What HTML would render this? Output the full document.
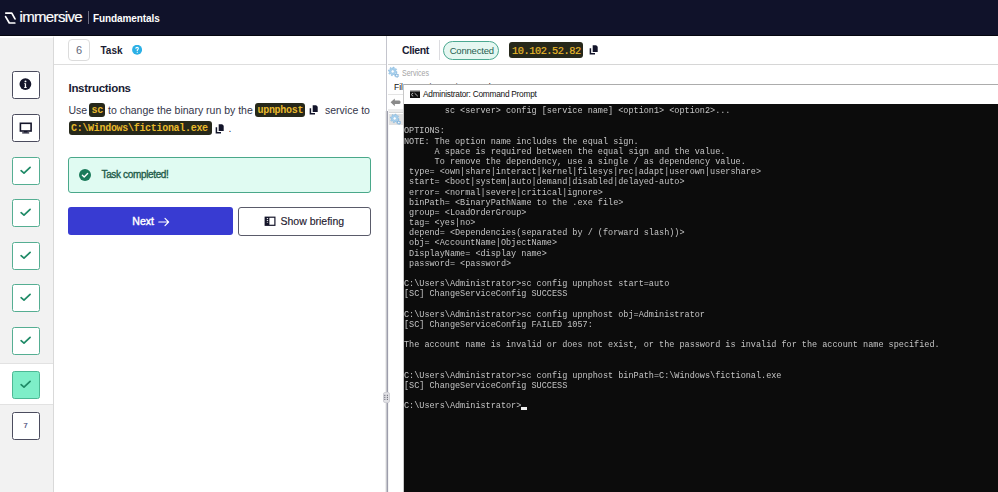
<!DOCTYPE html>
<html><head><meta charset="utf-8">
<style>
*{margin:0;padding:0;box-sizing:border-box}
html,body{width:998px;height:492px;overflow:hidden;background:#fff;font-family:"Liberation Sans",sans-serif;position:relative}
.abs{position:absolute}
#hdr{z-index:10;left:0;top:0;width:998px;height:36px;background:#10122a;border-bottom:1px solid #05060f}
#side{left:0;top:36px;width:54px;height:456px;background:#f2f2f2;border-right:1px solid #d9d9d9;border-top:2px solid #fff}
.row{position:absolute;left:0;width:53px;height:42.5px}
.sq{position:absolute;left:12px;top:7px;width:28px;height:28px;border:1.5px solid #4b4c5e;border-radius:2.5px;background:#fff}
.sq.g{border-color:#55ae92}
.sq svg{position:absolute;left:0;top:0}
#task{left:54px;top:35px;width:332px;height:457px;background:#fff}
#split{z-index:5;left:385px;top:111px;width:4px;height:381px;background:linear-gradient(to right,#eeeeee 0,#eeeeee 1px,#c6c7cd 1px,#c6c7cd 2px,#9c9dab 2px,#9c9dab 3px,#f4f4f4 3px)}
#split2{z-index:5;left:386px;top:36px;width:1.3px;height:75px;background:#c4c5cd}
#rp{left:388px;top:35px;width:610px;height:457px;background:#fff;overflow:hidden}
.term{position:absolute;font-family:"Liberation Mono",monospace;font-size:8.5px;color:#c4c4c4;white-space:pre;line-height:10.19px;will-change:transform}
.txt{position:absolute;white-space:nowrap;line-height:1}
.badge{position:absolute;background:#26281a;border-radius:3px;color:#e8b92a;font-family:"Liberation Mono",monospace;font-weight:bold;white-space:nowrap;line-height:1}
</style></head><body>
<div id="hdr" class="abs">
  <svg class="abs" style="left:4px;top:11px" width="14" height="14" viewBox="0 0 14 14">
    <path d="M1.8,2.1 H7.8 L11,7.9 M1.6,5.6 L5.3,12 H10.8" fill="none" stroke="#fff" stroke-width="1.7" stroke-linecap="round" stroke-linejoin="round"/>
  </svg>
  <div class="txt" style="left:19.5px;top:9.3px;font-size:15px;color:#fff;letter-spacing:-0.65px;-webkit-text-stroke:0.2px #fff">immersive</div>
  <div class="abs" style="left:88px;top:11px;width:1px;height:13px;background:#6b6c80"></div>
  <div class="txt" style="left:93px;top:14px;font-size:10px;font-weight:bold;color:#fff;letter-spacing:-0.1px">Fundamentals</div>
</div>
<div id="side" class="abs">
<div class="row" style="top:26.299999999999997px;"><div class="sq" style=""><svg width="25" height="25" viewBox="0 0 25 25"><circle cx="12.4" cy="12.1" r="5.9" fill="#14152a"/><path d="M11.2,11.3 H13.1 V15.2 H13.9 V16 H11 V15.2 H11.8 V12.1 H11.2 Z" fill="#fff"/><circle cx="12.5" cy="9.4" r="0.95" fill="#fff"/></svg></div></div>
<div class="row" style="top:68.9px;"><div class="sq" style=""><svg width="25" height="25" viewBox="0 0 25 25"><rect x="7.4" y="8.3" width="10.7" height="7.7" fill="none" stroke="#14152a" stroke-width="1.6"/><rect x="10.9" y="16" width="3.6" height="1.5" fill="#14152a"/><rect x="9.2" y="17.3" width="7" height="1.2" fill="#14152a"/></svg></div></div>
<div class="row" style="top:111.5px;"><div class="sq g" style=""><svg width="25" height="25" viewBox="0 0 25 25"><path d="M8.1,12.7 L11,15.2 L17.1,9.4" fill="none" stroke="#1e8a66" stroke-width="1.7" stroke-linecap="round" stroke-linejoin="round"/></svg></div></div>
<div class="row" style="top:154.10000000000002px;"><div class="sq g" style=""><svg width="25" height="25" viewBox="0 0 25 25"><path d="M8.1,12.7 L11,15.2 L17.1,9.4" fill="none" stroke="#1e8a66" stroke-width="1.7" stroke-linecap="round" stroke-linejoin="round"/></svg></div></div>
<div class="row" style="top:196.7px;"><div class="sq g" style=""><svg width="25" height="25" viewBox="0 0 25 25"><path d="M8.1,12.7 L11,15.2 L17.1,9.4" fill="none" stroke="#1e8a66" stroke-width="1.7" stroke-linecap="round" stroke-linejoin="round"/></svg></div></div>
<div class="row" style="top:239.3px;"><div class="sq g" style=""><svg width="25" height="25" viewBox="0 0 25 25"><path d="M8.1,12.7 L11,15.2 L17.1,9.4" fill="none" stroke="#1e8a66" stroke-width="1.7" stroke-linecap="round" stroke-linejoin="round"/></svg></div></div>
<div class="row" style="top:281.90000000000003px;"><div class="sq g" style=""><svg width="25" height="25" viewBox="0 0 25 25"><path d="M8.1,12.7 L11,15.2 L17.1,9.4" fill="none" stroke="#1e8a66" stroke-width="1.7" stroke-linecap="round" stroke-linejoin="round"/></svg></div></div>
<div class="row" style="top:324.5px;background:#fff;border-top:1px solid #e2e2e2;border-bottom:1px solid #e2e2e2;height:42px;"><div class="sq g" style="background:#7eeec8;border-color:#4cb894;"><svg width="25" height="25" viewBox="0 0 25 25"><path d="M8.1,12.7 L11,15.2 L17.1,9.4" fill="none" stroke="#1e8a66" stroke-width="1.7" stroke-linecap="round" stroke-linejoin="round"/></svg></div></div>
<div class="row" style="top:367.1px;"><div class="sq" style=""><div class="txt" style="left:0;width:25px;text-align:center;top:9px;font-size:7.5px;color:#4a4e7a;-webkit-text-stroke:0.2px #4a4e7a">7</div></div></div>
</div>
<div id="task" class="abs">
  <div class="abs" style="left:14px;top:4px;width:22px;height:22px;border:1px solid #dcdcdc;border-radius:4px"></div>
  <div class="txt" style="left:14px;width:22px;text-align:center;top:10px;font-size:11px;color:#62667a">6</div>
  <div class="txt" style="left:46.5px;top:11px;font-size:10px;font-weight:bold;color:#1a1c33">Task</div>
  <svg class="abs" style="left:77.5px;top:10px" width="10" height="10" viewBox="0 0 10 10"><circle cx="5.1" cy="4.8" r="5" fill="#2bb0e6"/><path d="M3.7,3.6 Q3.8,2.4 5.1,2.4 Q6.4,2.4 6.4,3.6 Q6.4,4.5 5.3,4.9 V6.1" fill="none" stroke="#fff" stroke-width="1.1"/><rect x="4.75" y="6.8" width="1.1" height="1" fill="#fff"/></svg>
  <div class="abs" style="left:0;top:29px;width:332px;height:1px;background:#dedede"></div>
  <div class="txt" style="left:14.5px;top:47.5px;font-size:11.5px;font-weight:bold;color:#1a1c33;letter-spacing:-0.3px">Instructions</div>
  <div class="txt" style="left:14.5px;top:70px;font-size:10.5px;color:#33354a">Use</div>
  <div class="badge" style="left:35px;top:67.5px;width:16px;height:14px;font-size:10px;letter-spacing:-0.3px;padding:3px 0 0 2.5px">sc</div>
  <div class="txt" style="left:54px;top:70px;font-size:10.5px;color:#33354a">to change the binary run by the</div>
  <div class="badge" style="left:201px;top:67.5px;width:50px;height:14px;font-size:10px;letter-spacing:-0.3px;padding:3px 0 0 2.5px">upnphost</div>
  <svg class="abs" style="left:255px;top:68.5px" width="10" height="11" viewBox="0 0 10 11"><path d="M3.7,1.2 H7.2 L8.7,2.7 V7.9 H3.7 Z" fill="#12142a"/><path d="M1.4,4.2 V9.8 H6" fill="none" stroke="#12142a" stroke-width="1.5"/></svg>
  <div class="txt" style="left:271px;top:70px;font-size:10.5px;color:#33354a">service to</div>
  <div class="badge" style="left:14.5px;top:85.7px;width:143.5px;height:14px;font-size:10px;letter-spacing:-0.3px;padding:3.2px 0 0 2.5px">C:\Windows\fictional.exe</div>
  <svg class="abs" style="left:161px;top:88px" width="10" height="11" viewBox="0 0 10 11"><path d="M3.7,1.2 H7.2 L8.7,2.7 V7.9 H3.7 Z" fill="#12142a"/><path d="M1.4,4.2 V9.8 H6" fill="none" stroke="#12142a" stroke-width="1.5"/></svg>
  <div class="txt" style="left:174.5px;top:88px;font-size:10.5px;color:#33354a">.</div>
  <div class="abs" style="left:14px;top:122.4px;width:303px;height:35.4px;border:1px solid #4aa88a;border-radius:3px;background:#e0fbf2"></div>
  <svg class="abs" style="left:24.5px;top:133.5px" width="12" height="12" viewBox="0 0 12 12"><circle cx="6" cy="6" r="6" fill="#1b7a5a"/><path d="M3.4,6.2 L5.2,7.9 L8.6,4.5" fill="none" stroke="#fff" stroke-width="1.4" stroke-linecap="round" stroke-linejoin="round"/></svg>
  <div class="txt" style="left:47.5px;top:134.6px;font-size:10px;color:#1f5c4a;letter-spacing:-0.35px;-webkit-text-stroke:0.35px #1f5c4a">Task completed!</div>
  <div class="abs" style="left:14.2px;top:172.2px;width:164.8px;height:28.3px;background:#383bd2;border-radius:3px"></div>
  <div class="txt" style="left:78.3px;top:181.2px;font-size:10.5px;color:#fff;-webkit-text-stroke:0.4px #fff">Next</div>
  <svg class="abs" style="left:104px;top:181.5px" width="12" height="10" viewBox="0 0 12 10"><path d="M0.8,5 H10.6 M7,1.4 L10.6,5 L7,8.6" fill="none" stroke="#fff" stroke-width="1.15" stroke-linecap="round" stroke-linejoin="round"/></svg>
  <div class="abs" style="left:183.5px;top:172px;width:133.5px;height:28.5px;border:1px solid #5a5b6a;border-radius:3px;background:#fff"></div>
  <svg class="abs" style="left:209.5px;top:181.3px" width="12" height="11" viewBox="0 0 12 11"><rect x="0.6" y="0.6" width="10.9" height="9.3" fill="#14152a"/><rect x="5.4" y="1.8" width="4.9" height="6.9" fill="#fff"/><rect x="2.8" y="2.1" width="1.3" height="1" fill="#fff"/><rect x="2.8" y="4.1" width="1.3" height="1" fill="#fff"/><rect x="2.8" y="6.1" width="1.3" height="0.8" fill="#aaa"/></svg>
  <div class="txt" style="left:226.5px;top:180.7px;font-size:10.5px;color:#1f2030;-webkit-text-stroke:0.15px #1f2030">Show briefing</div>
</div>
<div id="split" class="abs"></div><div id="split2" class="abs"></div>
<div class="abs" style="z-index:6;left:382.5px;top:391.5px;width:7.5px;height:11px;background:#e2e2e6;border:1px solid #d0d0d6;border-radius:2px"></div>
<svg class="abs" style="z-index:7;left:383px;top:393px" width="6" height="8" viewBox="0 0 6 8"><g fill="#5e5f6c"><rect x="1.2" y="1.8" width="1.2" height="1"/><rect x="3.8" y="1.8" width="1.2" height="1"/><rect x="1.2" y="3.8" width="1.2" height="1"/><rect x="3.8" y="3.8" width="1.2" height="1"/><rect x="1.2" y="5.8" width="1.2" height="1"/><rect x="3.8" y="5.8" width="1.2" height="1"/></g></svg>
<div id="rp" class="abs">
  <div class="txt" style="left:14px;top:10px;font-size:10.5px;font-weight:bold;color:#1a1c33;letter-spacing:-0.4px">Client</div>
  <div class="abs" style="left:50.6px;top:5.3px;width:1.4px;height:19.5px;background:#dcdce0"></div>
  <div class="abs" style="left:55px;top:6px;width:55.8px;height:18.8px;border:1.4px solid #4aa890;border-radius:10px;background:#e5f7f1"></div>
  <div class="txt" style="left:61.7px;top:11.3px;font-size:9.5px;color:#1f5f50;letter-spacing:-0.2px">Connected</div>
  <div class="badge" style="left:121px;top:7px;width:74px;height:16px;font-size:10.3px;letter-spacing:-0.45px;padding:4.3px 0 0 3px;font-weight:normal;-webkit-text-stroke:0.2px #e8b92a">10.102.52.82</div>
  <svg class="abs" style="left:201px;top:8.8px" width="10" height="11" viewBox="0 0 10 11"><path d="M3.7,1.2 H7.2 L8.7,2.7 V7.9 H3.7 Z" fill="#12142a"/><path d="M1.4,4.2 V9.8 H6" fill="none" stroke="#12142a" stroke-width="1.5"/></svg>
  <div class="abs" style="left:0;top:29px;width:610px;height:1px;background:#d6d6d6"></div>
  <!-- services window -->
  <svg class="abs" style="left:-1px;top:30px" width="14" height="14" viewBox="0 0 14 14"><path d="M9.00,6.40 L10.08,6.81 L9.83,7.92 L8.67,7.83 L8.03,8.73 L8.50,9.79 L7.54,10.40 L6.79,9.51 L5.70,9.70 L5.29,10.78 L4.18,10.53 L4.27,9.37 L3.37,8.73 L2.31,9.20 L1.70,8.24 L2.59,7.49 L2.40,6.40 L1.32,5.99 L1.57,4.88 L2.73,4.97 L3.37,4.07 L2.90,3.01 L3.86,2.40 L4.61,3.29 L5.70,3.10 L6.11,2.02 L7.22,2.27 L7.13,3.43 L8.03,4.07 L9.09,3.60 L9.70,4.56 L8.81,5.31 Z" fill="#a9d2ee" stroke="#7fb0d8" stroke-width="0.5"/><circle cx="5.7" cy="6.4" r="1.6" fill="#fff" stroke="#86b6dc" stroke-width="0.5"/><path d="M11.10,10.50 L11.68,10.80 L11.45,11.45 L10.81,11.32 L10.45,11.63 L10.48,12.27 L9.80,12.40 L9.60,11.78 L9.15,11.63 L8.60,11.98 L8.15,11.45 L8.59,10.97 L8.50,10.50 L7.92,10.20 L8.15,9.55 L8.79,9.68 L9.15,9.37 L9.12,8.73 L9.80,8.60 L10.00,9.22 L10.45,9.37 L11.00,9.02 L11.45,9.55 L11.01,10.03 Z" fill="#9cc8ea" stroke="#6fa2cf" stroke-width="0.5"/><circle cx="9.8" cy="10.5" r="0.7" fill="#fff"/></svg>
  <div class="txt" style="left:13.6px;top:34px;font-size:8.8px;color:#a4a4a4;transform:scaleX(0.8);transform-origin:0 0">Services</div>
  <div class="txt" style="left:6px;top:47.5px;font-size:8.5px;color:#111">File&nbsp;&nbsp;&nbsp;&nbsp;Action&nbsp;&nbsp;&nbsp;&nbsp;View&nbsp;&nbsp;&nbsp;&nbsp;Help</div>
  <div class="abs" style="left:0;top:59px;width:610px;height:1px;background:#e4e4e4"></div>
  <svg class="abs" style="left:2px;top:63px" width="11" height="9" viewBox="0 0 11 9"><path d="M0.6,4.3 L4.8,0.4 V2.6 H9.2 Q10.6,2.6 10.6,4.3 Q10.6,6 9.2,6 H4.8 V8.3 Z" fill="#8a8a8a"/></svg>
  <div class="abs" style="left:0;top:74px;width:610px;height:3px;background:#ececec"></div><div class="abs" style="left:0;top:77px;width:610px;height:1px;background:#d8d8d8"></div>
  <div class="abs" style="left:0.5px;top:78.5px;width:20px;height:11.2px;background:#e2e2e2"></div>
  <svg class="abs" style="left:1px;top:77px" width="14" height="14" viewBox="0 0 14 14"><path d="M9.00,6.40 L10.08,6.81 L9.83,7.92 L8.67,7.83 L8.03,8.73 L8.50,9.79 L7.54,10.40 L6.79,9.51 L5.70,9.70 L5.29,10.78 L4.18,10.53 L4.27,9.37 L3.37,8.73 L2.31,9.20 L1.70,8.24 L2.59,7.49 L2.40,6.40 L1.32,5.99 L1.57,4.88 L2.73,4.97 L3.37,4.07 L2.90,3.01 L3.86,2.40 L4.61,3.29 L5.70,3.10 L6.11,2.02 L7.22,2.27 L7.13,3.43 L8.03,4.07 L9.09,3.60 L9.70,4.56 L8.81,5.31 Z" fill="#a9d2ee" stroke="#7fb0d8" stroke-width="0.5"/><circle cx="5.7" cy="6.4" r="1.6" fill="#fff" stroke="#86b6dc" stroke-width="0.5"/><path d="M11.10,10.50 L11.68,10.80 L11.45,11.45 L10.81,11.32 L10.45,11.63 L10.48,12.27 L9.80,12.40 L9.60,11.78 L9.15,11.63 L8.60,11.98 L8.15,11.45 L8.59,10.97 L8.50,10.50 L7.92,10.20 L8.15,9.55 L8.79,9.68 L9.15,9.37 L9.12,8.73 L9.80,8.60 L10.00,9.22 L10.45,9.37 L11.00,9.02 L11.45,9.55 L11.01,10.03 Z" fill="#9cc8ea" stroke="#6fa2cf" stroke-width="0.5"/><circle cx="9.8" cy="10.5" r="0.7" fill="#fff"/></svg>
  <!-- cmd window -->
  <div class="abs" style="left:15.3px;top:49px;width:600px;height:420px;background:#fff;border-top:1px solid #acacac;border-left:1px solid #c8c8c8"></div>
  <svg class="abs" style="left:21.7px;top:55.2px" width="10" height="8" viewBox="0 0 10 8"><rect width="10" height="8" fill="#111"/><rect x="0" y="0" width="10" height="1.5" fill="#b0b0b0"/><path d="M3.2,3.2 Q1.6,3.2 1.6,4.6 Q1.6,6 3.2,6" stroke="#ddd" stroke-width="0.8" fill="none"/><path d="M4.6,3.2 L7.8,6.2" stroke="#ddd" stroke-width="0.8"/></svg>
  <div class="txt" style="left:35px;top:54.7px;font-size:8.3px;color:#111;letter-spacing:-0.25px">Administrator: Command Prompt</div>
  <div class="abs" style="left:16.2px;top:69px;width:600px;height:400px;background:#0c0c0c"></div>
  <div class="term" style="left:16.3px;top:71px">        sc &lt;server&gt; config [service name] &lt;option1&gt; &lt;option2&gt;...

OPTIONS:
NOTE: The option name includes the equal sign.
      A space is required between the equal sign and the value.
      To remove the dependency, use a single / as dependency value.
 type= &lt;own|share|interact|kernel|filesys|rec|adapt|userown|usershare&gt;
 start= &lt;boot|system|auto|demand|disabled|delayed-auto&gt;
 error= &lt;normal|severe|critical|ignore&gt;
 binPath= &lt;BinaryPathName to the .exe file&gt;
 group= &lt;LoadOrderGroup&gt;
 tag= &lt;yes|no&gt;
 depend= &lt;Dependencies(separated by / (forward slash))&gt;
 obj= &lt;AccountName|ObjectName&gt;
 DisplayName= &lt;display name&gt;
 password= &lt;password&gt;

C:\Users\Administrator&gt;sc config upnphost start=auto
[SC] ChangeServiceConfig SUCCESS

C:\Users\Administrator&gt;sc config upnphost obj=Administrator
[SC] ChangeServiceConfig FAILED 1057:

The account name is invalid or does not exist, or the password is invalid for the account name specified.


C:\Users\Administrator&gt;sc config upnphost binPath=C:\Windows\fictional.exe
[SC] ChangeServiceConfig SUCCESS

C:\Users\Administrator&gt;<span style="display:inline-block;width:6px;height:3px;background:#eee;vertical-align:-1.2px;margin-left:-0.7px"></span></div>
</div>
</body></html>
